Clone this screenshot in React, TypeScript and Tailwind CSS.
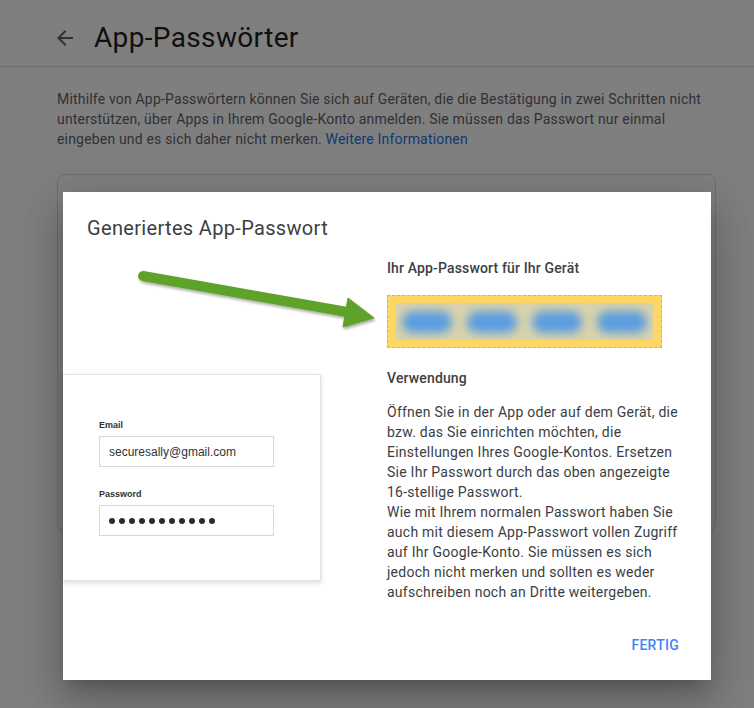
import React from "react";

function BackArrow() {
  return (
    <svg width="24" height="24" viewBox="0 0 24 24" className="text-[#5f6368]" aria-hidden="true">
      <path
        fill="currentColor"
        d="M20 11H7.83l5.59-5.59L12 4l-8 8 8 8 1.41-1.41L7.83 13H20v-2z"
      />
    </svg>
  );
}

function GreenArrow() {
  return (
    <svg width="324" height="80" viewBox="0 0 324 80" className="block overflow-visible" aria-hidden="true">
      <defs>
        <filter id="arrowShadow" x="-10%" y="-50%" width="120%" height="200%">
          <feDropShadow dx="1" dy="2" stdDeviation="1.5" floodColor="#000" floodOpacity="0.35" />
        </filter>
      </defs>
      <g filter="url(#arrowShadow)" fill="#5fa22a" stroke="#5fa22a">
        <line x1="80" y1="18" x2="284" y2="54" strokeWidth="10" strokeLinecap="round" />
        <polygon points="285,40 311,60 280,69" strokeWidth="1" strokeLinejoin="round" />
      </g>
    </svg>
  );
}

function LoginCard() {
  const dots = Array.from({ length: 11 });
  return (
    <div className="w-[258px] h-[207px] bg-white border border-l-0 border-[#e3e3e3] shadow-[0_2px_5px_rgba(0,0,0,0.14)] pl-[36px] pt-[44px] font-['Liberation_Sans',Arial,sans-serif] text-[#333]">
      <div className="text-[9px] font-bold leading-[12px]">Email</div>
      <div className="mt-[5px] w-[175px] h-[31px] border border-[#d8d8d8] flex items-center pl-[9px] text-[12px]">
        securesally@gmail.com
      </div>
      <div className="mt-[21px] text-[9px] font-bold leading-[12px]">Password</div>
      <div className="mt-[5px] w-[175px] h-[31px] border border-[#d8d8d8] flex items-center pl-[9px] gap-[4px]">
        {dots.map((_, i) => (
          <span key={i} className="w-[6px] h-[6px] rounded-full bg-[#2b2b2b]" />
        ))}
      </div>
    </div>
  );
}

function PasswordBox() {
  return (
    <div className="mt-[17px] w-[275px] h-[53px] bg-[#fdd663] border border-dashed border-[#e2b443] px-[8px] py-[7px]">
      <div className="h-full bg-[#d9d3ac] flex items-center gap-[15px] pl-[6px] overflow-hidden">
        <div className="w-[50px] h-[22px] rounded-full bg-[#5b9de0] blur-[5px]" />
        <div className="w-[50px] h-[22px] rounded-full bg-[#5b9de0] blur-[5px]" />
        <div className="w-[50px] h-[22px] rounded-full bg-[#5b9de0] blur-[5px]" />
        <div className="w-[50px] h-[22px] rounded-full bg-[#5b9de0] blur-[5px]" />
      </div>
    </div>
  );
}

export default function App() {
  return (
    <div className="relative w-[754px] h-[708px] overflow-hidden bg-white font-['Roboto','Liberation_Sans',sans-serif]">
      {/* page behind the dialog */}
      <header className="h-[67px] border-b border-[#dadce0] pt-[20px] pl-[53px] flex items-start">
        <div className="h-[36px] flex items-center">
          <BackArrow />
          <h1 className="ml-[17px] text-[28px] leading-[36px] tracking-[0.35px] text-[#202124] font-normal">
            App-Passwörter
          </h1>
        </div>
      </header>
      <div className="pl-[57px] w-[716px]">
        <p className="pt-[22px] text-[14px] leading-[20px] tracking-[0.18px] text-[#5f6368]">
          Mithilfe von App-Passwörtern können Sie sich auf Geräten, die die Bestätigung in zwei Schritten nicht
          unterstützen, über Apps in Ihrem Google-Konto anmelden. Sie müssen das Passwort nur einmal eingeben und es
          sich daher nicht merken. <a className="text-[#1a73e8]">Weitere Informationen</a>
        </p>
        <div className="mt-[25px] h-[358px] rounded-lg border border-[#dadce0]" />
      </div>

      {/* scrim */}
      <div className="absolute inset-0 bg-black/50" />

      {/* dialog */}
      <div className="absolute left-[63px] top-[192px] w-[648px] h-[488px] bg-white flex flex-col shadow-[0_11px_15px_-7px_rgba(0,0,0,0.2),0_24px_38px_3px_rgba(0,0,0,0.14),0_9px_46px_8px_rgba(0,0,0,0.12)]">
        <h2 className="pt-[22px] pl-[24px] text-[20px] leading-[28px] tracking-[0.33px] text-[#3c4043] font-normal">
          Generiertes App-Passwort
        </h2>
        <div className="mt-4 flex">
          <div className="w-[324px] shrink-0">
            <GreenArrow />
            <div className="mt-[36px]">
              <LoginCard />
            </div>
          </div>
          <div className="w-[300px] text-[#3c4043]">
            <div className="text-[14px] leading-[20px] tracking-[0.15px] font-medium">Ihr App-Passwort für Ihr Gerät</div>
            <PasswordBox />
            <div className="mt-5 text-[14px] leading-[20px] tracking-[0.15px] font-medium">Verwendung</div>
            <p className="mt-[14px] text-[14px] leading-[20px] tracking-[0.25px]">
              Öffnen Sie in der App oder auf dem Gerät, die bzw. das Sie einrichten möchten, die Einstellungen Ihres
              Google-Kontos. Ersetzen Sie Ihr Passwort durch das oben angezeigte 16-stellige Passwort.
              <br />
              Wie mit Ihrem normalen Passwort haben Sie auch mit diesem App-Passwort vollen Zugriff auf Ihr
              Google-Konto. Sie müssen es sich jedoch nicht merken und sollten es weder aufschreiben noch an Dritte
              weitergeben.
            </p>
          </div>
        </div>
        <div className="mt-auto mb-[17px] pr-[24px] flex justify-end">
          <button className="h-[36px] px-[8px] text-[14px] font-medium tracking-[0.25px] text-[#4285f4] uppercase">
            Fertig
          </button>
        </div>
      </div>
    </div>
  );
}
